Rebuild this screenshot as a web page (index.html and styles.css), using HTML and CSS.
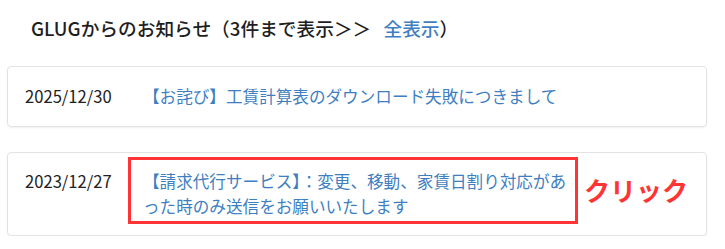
FILE: index.html
```html
<!DOCTYPE html>
<html lang="ja">
<head>
<meta charset="utf-8">
<link rel="stylesheet" href="styles.css">
</head>
<body>
<div class="notice">
  <h3 class="notice-title">GLUGからのお知らせ（3件まで表示＞＞ <a class="all-link" href="#">全表示</a>）</h3>
  <div class="card">
    <span class="date">2025/12/30</span>
    <a class="item-link" href="#">【お詫び】工賃計算表のダウンロード失敗につきまして</a>
  </div>
  <div class="card card-annotated">
    <span class="date">2023/12/27</span>
    <a class="item-link" href="#">【請求代行サービス】：変更、移動、家賃日割り対応があった時のみ送信をお願いいたします</a>
    <div class="mark-box"></div>
    <div class="mark-label">クリック</div>
  </div>
</div>
</body>
</html>
```
FILE: styles.css
```css
html, body {
  margin: 0;
  padding: 0;
  background: #ffffff;
}
body {
  font-family: "Noto Sans CJK JP", "Noto Sans", sans-serif;
  color: #222222;
}
.notice {
  padding: 14px 18px 0 7px;
}
.notice-title {
  margin: 0 0 24px 24px;
  font-size: 18.7px;
  line-height: 28px;
  font-weight: 500;
  color: #1e1e1e;
}
.all-link {
  color: #3f7fc1;
  text-decoration: none;
  font-weight: 500;
  margin-left: 8px;
}
.card {
  display: flex;
  align-items: flex-start;
  width: 700px;
  box-sizing: border-box;
  border: 1px solid #e3e3e3;
  border-radius: 4px;
  box-shadow: 0 1px 2px rgba(0, 0, 0, 0.06);
  padding: 17px 17px;
  font-size: 16.6px;
  line-height: 25px;
  margin-bottom: 25px;
  position: relative;
}
.card:last-child {
  margin-bottom: 0;
  padding-top: 16px;
  padding-bottom: 16px;
}
.date {
  flex: 0 0 118px;
  color: #222222;
}
.item-link {
  color: #3f7fc1;
  text-decoration: none;
  max-width: 428px;
}
.mark-box {
  position: absolute;
  left: 120px;
  top: 4px;
  width: 450px;
  height: 67px;
  box-sizing: border-box;
  border: 3px solid #ff3434;
}
.mark-label {
  position: absolute;
  left: 576px;
  top: 20px;
  font-size: 26px;
  line-height: 34px;
  font-weight: 700;
  color: #ff3434;
}
```
